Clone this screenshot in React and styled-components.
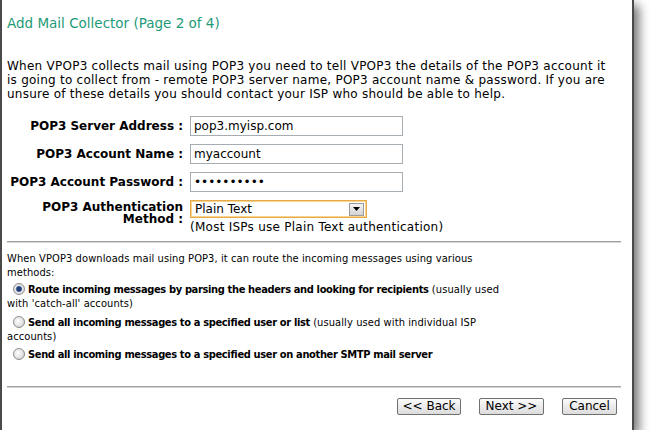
import React from "react";
import styled, { createGlobalStyle } from "styled-components";

const GlobalStyle = createGlobalStyle`
  body {
    margin: 0;
    background: #fff;
  }
`;

const Window = styled.div`
  width: 634px;
  height: 430px;
  box-sizing: border-box;
  background: #fff;
  border-left: 2px solid #4a4a4a;
  border-right: 2px solid #4a4a4a;
  box-shadow: 5px 5px 10px rgba(0, 0, 0, 0.55);
  padding: 15px 11px 15px 5px;
  display: flex;
  flex-direction: column;
  font-family: "DejaVu Sans", Verdana, sans-serif;
  font-size: 12px;
  letter-spacing: 0.25px;
  color: #000;
`;

const Title = styled.h1`
  margin: 0;
  font-size: 13.5px;
  line-height: 16px;
  font-weight: normal;
  letter-spacing: 0;
  color: #1d9a78;
`;

const Intro = styled.p`
  margin: 28px 0 0;
  width: 610px;
  line-height: 14px;
`;

const FormGrid = styled.div`
  margin-top: 15px;
  display: grid;
  grid-template-columns: 176px auto;
  column-gap: 7px;
  row-gap: 8px;
  justify-content: start;
`;

const Label = styled.label`
  font-weight: bold;
  letter-spacing: 0;
  text-align: right;
  align-self: ${(p) => (p.$top ? "start" : "center")};
  line-height: ${(p) => (p.$top ? "12px" : "14px")};
  margin-top: ${(p) => (p.$top ? "1px" : "0")};
`;

const TextInput = styled.input`
  box-sizing: border-box;
  width: 213px;
  height: 20px;
  border: 1px solid #a5acb2;
  padding: 1px 3px;
  font-family: "DejaVu Sans", Verdana, sans-serif;
  font-size: 12px;
  color: #000;
  outline: none;
`;

const SelectCell = styled.div`
  display: flex;
  flex-direction: column;
`;

const SelectBox = styled.div`
  box-sizing: border-box;
  width: 177px;
  height: 18px;
  border: 1px solid #e5a94a;
  box-shadow: inset 0 0 0 1px #f6d58e;
  display: flex;
  align-items: center;
  justify-content: space-between;
  padding: 0 2px 0 4px;
  letter-spacing: 0;
`;

const ArrowButton = styled.span`
  box-sizing: border-box;
  width: 15px;
  height: 13px;
  border: 1px solid #9a9a9a;
  background: linear-gradient(#f4f4f4, #d4d4d4);
  display: flex;
  align-items: center;
  justify-content: center;
`;

const Note = styled.div`
  margin-top: 2px;
  line-height: 14px;
`;

const Divider = styled.div`
  flex: none;
  height: 1px;
  border-top: 1px solid #a0a0a0;
  background: #d6d6d6;
  margin-top: ${(p) => (p.$auto ? "auto" : `${p.$mt}px`)};
`;

const Lower = styled.div`
  margin-top: 9px;
  width: 502px;
  font-family: "DejaVu Sans Condensed", "DejaVu Sans", sans-serif;
  font-size: 11px;
  letter-spacing: 0.1px;
  line-height: 14px;
`;

const RadioItem = styled.div`
  margin-top: ${(p) => p.$mt}px;
  b {
    font-weight: bold;
    letter-spacing: -0.35px;
  }
`;

const Radio = styled.span`
  display: inline-block;
  box-sizing: border-box;
  width: 12px;
  height: 12px;
  margin: 0 3px 0 6px;
  vertical-align: -2px;
  border-radius: 50%;
  border: 1px solid #8c8c8c;
  background: ${(p) =>
    p.$checked
      ? "radial-gradient(circle, #243f78 0 2.2px, #6f88b0 2.8px, #eaeaea 3.6px, #c9c9c9 100%)"
      : "radial-gradient(circle at 40% 40%, #fdfdfd 0, #e6e6e6 50%, #c4c4c4 100%)"};
`;

const ButtonRow = styled.div`
  margin-top: 10px;
  padding-right: 4px;
  display: flex;
  justify-content: flex-end;
  gap: 18px;
`;

const Button = styled.button`
  box-sizing: border-box;
  height: 17px;
  width: ${(p) => p.$w}px;
  padding: 0;
  border: 1px solid #707070;
  border-radius: 2px;
  background: linear-gradient(#fbfbfb, #dcdcdc);
  font-family: "DejaVu Sans", Verdana, sans-serif;
  font-size: 12px;
  line-height: 15px;
  color: #000;
`;

export default function App() {
  return (
    <>
      <GlobalStyle />
      <Window>
        <Title>Add Mail Collector (Page 2 of 4)</Title>
        <Intro>
          When VPOP3 collects mail using POP3 you need to tell VPOP3 the details of the POP3 account it
          is going to collect from - remote POP3 server name, POP3 account name &amp; password. If you are
          unsure of these details you should contact your ISP who should be able to help.
        </Intro>
        <FormGrid>
          <Label>POP3 Server Address :</Label>
          <TextInput defaultValue="pop3.myisp.com" />
          <Label>POP3 Account Name :</Label>
          <TextInput defaultValue="myaccount" />
          <Label>POP3 Account Password :</Label>
          <TextInput type="password" defaultValue="mypassword" />
          <Label $top>
            POP3 Authentication
            <br />
            Method :
          </Label>
          <SelectCell>
            <SelectBox>
              <span>Plain Text</span>
              <ArrowButton>
                <svg width="7" height="4" viewBox="0 0 7 4">
                  <path d="M0 0h7L3.5 4z" fill="#000" />
                </svg>
              </ArrowButton>
            </SelectBox>
            <Note>(Most ISPs use Plain Text authentication)</Note>
          </SelectCell>
        </FormGrid>
        <Divider $mt={7} />
        <Lower>
          When VPOP3 downloads mail using POP3, it can route the incoming messages using various methods:
          <RadioItem $mt={3}>
            <Radio $checked />
            <b>Route incoming messages by parsing the headers and looking for recipients</b> (usually used
            with 'catch-all' accounts)
          </RadioItem>
          <RadioItem $mt={5}>
            <Radio />
            <b>Send all incoming messages to a specified user or list</b> (usually used with individual ISP
            accounts)
          </RadioItem>
          <RadioItem $mt={4}>
            <Radio />
            <b>Send all incoming messages to a specified user on another SMTP mail server</b>
          </RadioItem>
        </Lower>
        <Divider $auto />
        <ButtonRow>
          <Button $w={64}>&lt;&lt; Back</Button>
          <Button $w={65}>Next &gt;&gt;</Button>
          <Button $w={55}>Cancel</Button>
        </ButtonRow>
      </Window>
    </>
  );
}
